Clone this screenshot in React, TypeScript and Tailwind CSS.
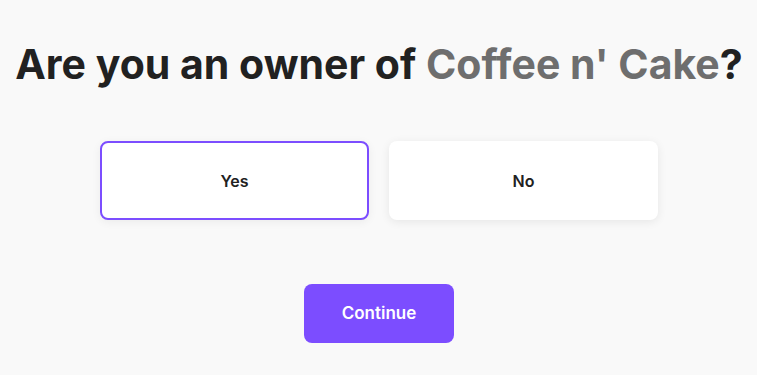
export default function App() {
  return (
    <div className="min-h-[375px] w-full bg-[#f9f9f9] flex flex-col items-center pt-[34px] pl-px font-['Inter',sans-serif]">
      <h1 className="text-[41px] leading-[60px] font-bold text-[#212121] whitespace-nowrap">
        Are you an owner of <span className="text-[#6e6e6e]">Coffee n' Cake</span>?
      </h1>

      <div className="mt-[47px] flex gap-5">
        <button className="w-[269px] h-[79px] rounded-lg bg-white border-2 border-[#7c4dff] text-base font-semibold text-[#212121] shadow-[0_2px_10px_rgba(0,0,0,0.06)]">
          Yes
        </button>
        <button className="w-[269px] h-[79px] rounded-lg bg-white text-base font-semibold text-[#212121] shadow-[0_2px_10px_rgba(0,0,0,0.08)]">
          No
        </button>
      </div>

      <button className="mt-[64px] w-[150px] h-[59px] rounded-lg bg-[#7c4dff] text-white text-[17px] font-semibold">
        Continue
      </button>
    </div>
  )
}
